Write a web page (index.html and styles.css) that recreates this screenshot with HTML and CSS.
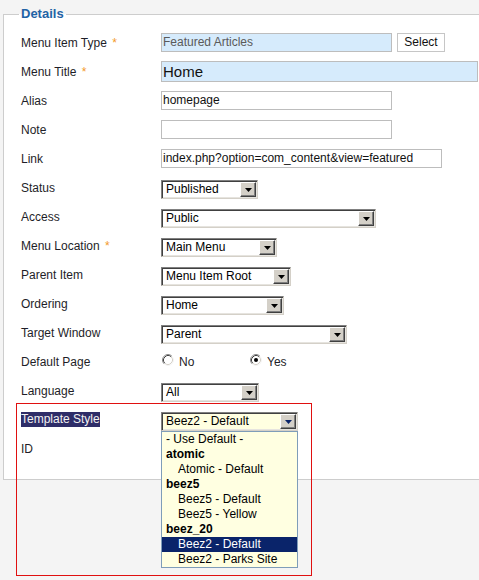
FILE: index.html
```html
<!DOCTYPE html>
<html>
<head>
<meta charset="utf-8">
<link rel="stylesheet" href="styles.css">
</head>
<body>
<fieldset class="details">
  <legend>Details</legend>

  <div class="row">
    <span class="lbl">Menu Item Type <span class="req">*</span></span>
    <div class="ctl">
      <div class="txt ro w231">Featured Articles</div>
      <div class="btn">Select</div>
    </div>
  </div>

  <div class="row">
    <span class="lbl">Menu Title <span class="req">*</span></span>
    <div class="ctl"><div class="txt title ro w317">Home</div></div>
  </div>

  <div class="row">
    <span class="lbl">Alias</span>
    <div class="ctl"><div class="txt w231">homepage</div></div>
  </div>

  <div class="row">
    <span class="lbl">Note</span>
    <div class="ctl"><div class="txt w231"></div></div>
  </div>

  <div class="row">
    <span class="lbl">Link</span>
    <div class="ctl"><div class="txt w281">index.php?option=com_content&amp;view=featured</div></div>
  </div>

  <div class="row">
    <span class="lbl">Status</span>
    <div class="ctl">
      <div class="sel w97"><span class="val">Published</span><span class="arr"><svg width="7" height="4" viewBox="0 0 7 4"><polygon points="0,0 7,0 3.5,4"/></svg></span></div>
    </div>
  </div>

  <div class="row">
    <span class="lbl">Access</span>
    <div class="ctl">
      <div class="sel w215"><span class="val">Public</span><span class="arr"><svg width="7" height="4" viewBox="0 0 7 4"><polygon points="0,0 7,0 3.5,4"/></svg></span></div>
    </div>
  </div>

  <div class="row">
    <span class="lbl">Menu Location <span class="req">*</span></span>
    <div class="ctl">
      <div class="sel w116"><span class="val">Main Menu</span><span class="arr"><svg width="7" height="4" viewBox="0 0 7 4"><polygon points="0,0 7,0 3.5,4"/></svg></span></div>
    </div>
  </div>

  <div class="row">
    <span class="lbl">Parent Item</span>
    <div class="ctl">
      <div class="sel w130"><span class="val">Menu Item Root</span><span class="arr"><svg width="7" height="4" viewBox="0 0 7 4"><polygon points="0,0 7,0 3.5,4"/></svg></span></div>
    </div>
  </div>

  <div class="row">
    <span class="lbl">Ordering</span>
    <div class="ctl">
      <div class="sel w123"><span class="val">Home</span><span class="arr"><svg width="7" height="4" viewBox="0 0 7 4"><polygon points="0,0 7,0 3.5,4"/></svg></span></div>
    </div>
  </div>

  <div class="row">
    <span class="lbl">Target Window</span>
    <div class="ctl">
      <div class="sel w186"><span class="val">Parent</span><span class="arr"><svg width="7" height="4" viewBox="0 0 7 4"><polygon points="0,0 7,0 3.5,4"/></svg></span></div>
    </div>
  </div>

  <div class="row">
    <span class="lbl">Default Page</span>
    <div class="ctl radios">
      <span class="opt">
        <svg class="radio" width="12" height="12" viewBox="0 0 12 12">
          <circle cx="6" cy="6" r="5" fill="#fff"/>
          <path d="M2.11 9.89A5.5 5.5 0 0 1 9.89 2.11" fill="none" stroke="#8a8a8a"/>
          <path d="M9.89 2.11A5.5 5.5 0 0 1 2.11 9.89" fill="none" stroke="#f4f4f4"/>
          <path d="M2.82 9.18A4.5 4.5 0 0 1 9.18 2.82" fill="none" stroke="#404040"/>
          <path d="M9.18 2.82A4.5 4.5 0 0 1 2.82 9.18" fill="none" stroke="#d4d0c8"/>
        </svg>
        <span>No</span>
      </span>
      <span class="opt">
        <svg class="radio" width="12" height="12" viewBox="0 0 12 12">
          <circle cx="6" cy="6" r="5" fill="#fff"/>
          <path d="M2.11 9.89A5.5 5.5 0 0 1 9.89 2.11" fill="none" stroke="#8a8a8a"/>
          <path d="M9.89 2.11A5.5 5.5 0 0 1 2.11 9.89" fill="none" stroke="#f4f4f4"/>
          <path d="M2.82 9.18A4.5 4.5 0 0 1 9.18 2.82" fill="none" stroke="#404040"/>
          <path d="M9.18 2.82A4.5 4.5 0 0 1 2.82 9.18" fill="none" stroke="#d4d0c8"/>
          <circle cx="6" cy="6" r="2" fill="#000"/>
        </svg>
        <span>Yes</span>
      </span>
    </div>
  </div>

  <div class="row">
    <span class="lbl">Language</span>
    <div class="ctl">
      <div class="sel w98"><span class="val">All</span><span class="arr"><svg width="7" height="4" viewBox="0 0 7 4"><polygon points="0,0 7,0 3.5,4"/></svg></span></div>
    </div>
  </div>

  <div class="row">
    <span class="lbl"><span class="hl">Template Style</span></span>
    <div class="ctl">
      <div class="sel focus w137">
        <span class="val">Beez2 - Default</span><span class="arr"><svg width="7" height="4" viewBox="0 0 7 4"><polygon points="0,0 7,0 3.5,4"/></svg></span>
        <ul class="list">
          <li>- Use Default -</li>
          <li class="grp">atomic</li>
          <li class="sub">Atomic - Default</li>
          <li class="grp">beez5</li>
          <li class="sub">Beez5 - Default</li>
          <li class="sub">Beez5 - Yellow</li>
          <li class="grp">beez_20</li>
          <li class="sub on">Beez2 - Default</li>
          <li class="sub">Beez2 - Parks Site</li>
        </ul>
      </div>
    </div>
  </div>

  <div class="row">
    <span class="lbl">ID</span>
    <div class="ctl"></div>
  </div>
</fieldset>

<div class="annot"></div>
</body>
</html>
```

FILE: styles.css
```css
html, body {
  margin: 0;
  padding: 0;
  overflow: hidden;
}

body {
  position: relative;
  width: 479px;
  height: 580px;
  box-sizing: border-box;
  padding-top: 6px;
  background: #f4f4f4;
  font-family: "Liberation Sans", Arial, sans-serif;
  font-size: 12px;
  color: #1e1e28;
}

.details {
  margin: 0 0 0 3px;
  min-width: 0;
  box-sizing: border-box;
  border: 1px solid #cdcdcd;
  border-right: 0;
  background: #fff;
  padding: 6px 0 16px 17px;
}

.details legend {
  font-size: 13px;
  font-weight: bold;
  line-height: 16px;
  color: #1f63a6;
  padding: 0 2px;
  margin-left: -2px;
}

.row {
  display: flex;
  align-items: center;
  height: 29px;
}

.lbl {
  width: 140px;
  flex: none;
}

.req {
  color: #f39a2a;
  margin-left: 2px;
}

.hl {
  background: #2e2d68;
  color: #f2f2f2;
  display: inline-block;
  line-height: 15px;
}

.ctl {
  display: flex;
  align-items: center;
}

.txt {
  box-sizing: border-box;
  height: 19px;
  border: 1px solid #bdbdbd;
  background: #fff;
  padding: 0 1px;
  line-height: 17px;
  color: #111;
  white-space: nowrap;
}

.txt.ro {
  background: #d6ebfc;
  color: #5a5a5a;
}

.txt.title {
  height: 21px;
  font-size: 15px;
  line-height: 19px;
  color: #111;
}

.btn {
  box-sizing: border-box;
  width: 48px;
  height: 19px;
  margin-left: 5px;
  border: 1px solid #c6c6c6;
  background: #fff;
  text-align: center;
  line-height: 17px;
  color: #111;
}

.w231 { width: 231px; }
.w317 { width: 317px; }
.w281 { width: 281px; }
.w97 { width: 97px; }
.w215 { width: 215px; }
.w116 { width: 116px; }
.w130 { width: 130px; }
.w123 { width: 123px; }
.w186 { width: 186px; }
.w98 { width: 98px; }
.w137 { width: 137px; }

.sel {
  position: relative;
  box-sizing: border-box;
  height: 19px;
  margin-top: 3px;
  display: flex;
  border: 1px solid;
  border-color: #808080 #d4d0c8 #d4d0c8 #808080;
  box-shadow: inset 1px 1px 0 #404040, inset -1px -1px 0 #e6e4df;
  background: #fff;
  padding: 1px;
}

.sel .val {
  flex: 1;
  padding-left: 3px;
  line-height: 15px;
  color: #000;
  white-space: nowrap;
  overflow: hidden;
}

.sel .arr {
  flex: none;
  box-sizing: border-box;
  width: 16px;
  height: 15px;
  background: #d4d0c8;
  border: 1px solid;
  border-color: #fff #404040 #404040 #fff;
  box-shadow: inset -1px -1px 0 #808080;
  display: flex;
  align-items: center;
  justify-content: center;
}

.sel .arr svg {
  display: block;
  fill: #000;
  margin-top: 1px;
}

.sel.focus {
  background: #ffffe1;
}

.sel.focus .arr svg {
  fill: #0a246a;
}

.list {
  position: absolute;
  left: -1px;
  top: 18px;
  width: 137px;
  box-sizing: border-box;
  margin: 0;
  padding: 0;
  list-style: none;
  background: #ffffe1;
  border: 1px solid #7f9db9;
  z-index: 2;
}

.list li {
  height: 15px;
  line-height: 15px;
  padding-left: 4px;
  color: #000;
  white-space: nowrap;
}

.list li.grp {
  font-weight: bold;
}

.list li.sub {
  padding-left: 16px;
}

.list li.on {
  background: #0a246a;
  color: #fff;
}

.radios {
  margin-left: 1px;
}

.opt {
  display: flex;
  align-items: center;
  width: 88px;
}

.opt .radio {
  display: block;
  margin-top: -3px;
  margin-right: 5px;
}

.annot {
  position: absolute;
  left: 16px;
  top: 403px;
  width: 296px;
  height: 173px;
  box-sizing: border-box;
  border: 1px solid #e01010;
  pointer-events: none;
}
```
